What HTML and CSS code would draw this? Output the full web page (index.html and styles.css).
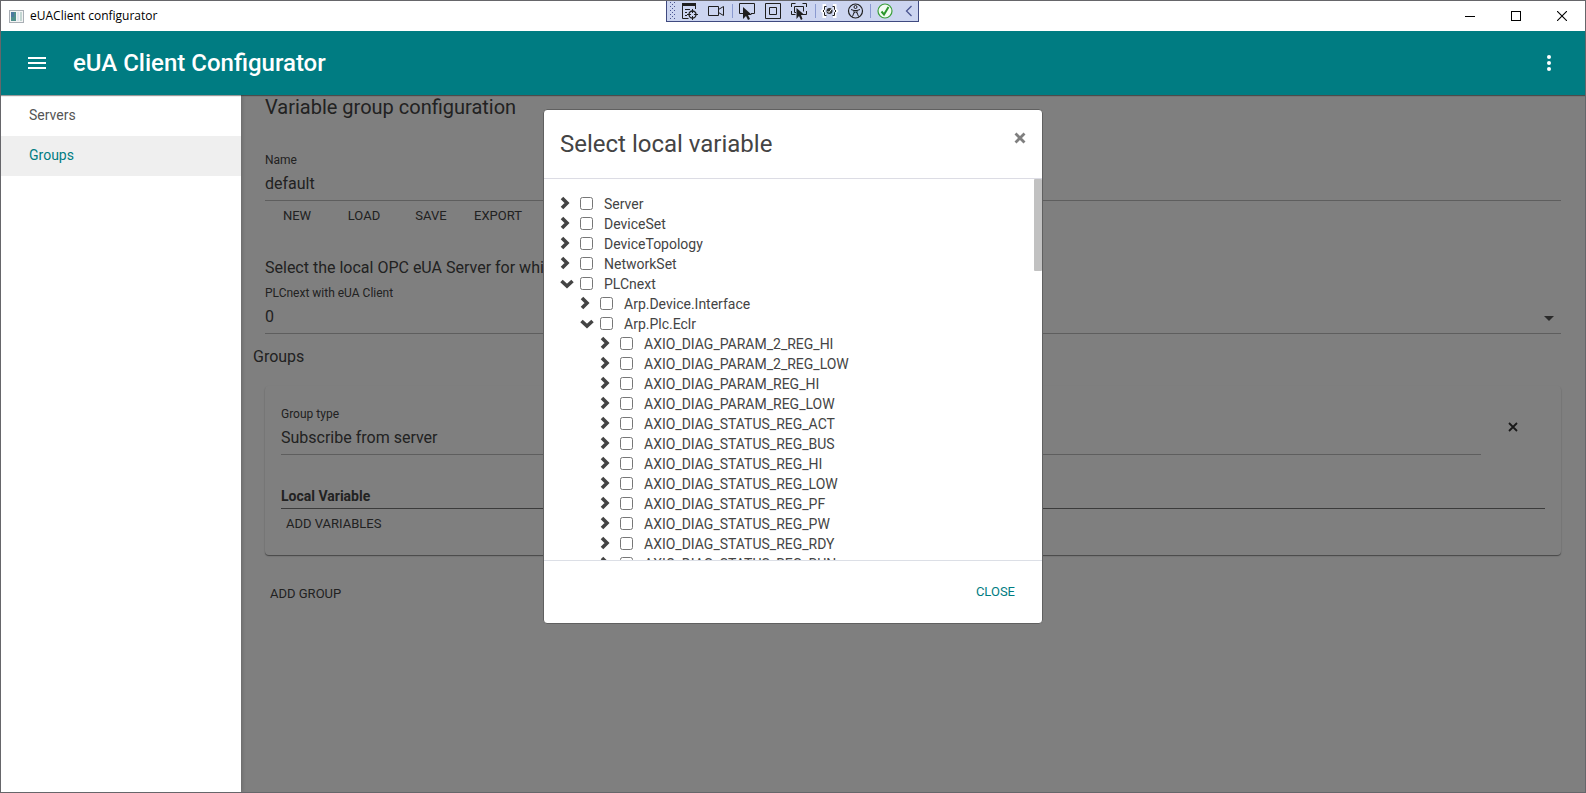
FILE: index.html
```html
<!DOCTYPE html>
<html lang="en">
<head>
<meta charset="utf-8">
<title>eUAClient configurator</title>
<link rel="stylesheet" href="styles.css">
</head>
<body>
<div class="window">
  <header class="titlebar">
    <svg class="titlebar-icon" width="15" height="13" viewBox="0 0 15 13"><rect x=".5" y=".5" width="14" height="12" fill="#f4f4f4" stroke="#a9afb5"/><rect x="2" y="2" width="5" height="9" fill="#4f8f8c"/><rect x="2" y="2" width="3" height="5" fill="#4c78a0"/><rect x="8" y="2" width="2" height="9" fill="#dfe6ee"/><rect x="11" y="2" width="2" height="9" fill="#c3d6d2"/></svg>
    <span class="titlebar-text">eUAClient configurator</span>
    <div class="caption-buttons">
      <button aria-label="Minimize"><svg width="10" height="10"><path d="M0 5.5h10" stroke="#000"/></svg></button>
      <button aria-label="Maximize"><svg width="10" height="10"><rect x=".5" y=".5" width="9" height="9" fill="none" stroke="#000"/></svg></button>
      <button aria-label="Close window"><svg width="10" height="10"><path d="M0 0l10 10M10 0L0 10" stroke="#000" stroke-width="1.1"/></svg></button>
    </div>
  </header>

  <div class="debugbar">
    <svg width="251" height="20" viewBox="0 0 251 20" fill="none" stroke="#1f1f1f">
      <path d="M3.5 1v18M7.5 1v18" stroke="#4a5590" stroke-dasharray="1 3"/><path d="M5.5 3v16" stroke="#4a5590" stroke-dasharray="1 3"/>
      <path d="M15 2h14v3H15z" fill="#1f1f1f" stroke="none"/><path d="M15.5 4v13.500h6M28.500 5v3M18 8.500h5M18 11.500h2M18 14.500h2"/><circle cx="25.500" cy="13.500" r="3.500" stroke-width="1.300"/><path d="M25.500 8v4M25.500 15v4M20 13.500h4M27 13.500h4"/>
      <path d="M41.500 5.500h10v9h-10zM51.500 8.500l5-3v9l-5-3"/>
      <path d="M65.500 3v14M148.500 3v14M203.500 3v14" stroke="#8a9ad0"/>
      <path d="M77 12.500h-4.500v-10h15v10H84"/><path d="M76 6v12l3-3 2 4 2-1-2-4h4z" fill="#1f1f1f" stroke="none"/>
      <path d="M98.500 2.500h15v15h-15zM102.500 6.500h7v7h-7z"/>
      <path d="M124.500 6V2.500h4M135.500 2.500h4V6M124.500 10v3.500h4M136 13.500h3.500V10M129 11.500h-1.500v-6h9v5"/><path d="M129.500 7v11l2.500-3 2 4 1.500-1-1.500-4h3.500z" fill="#1f1f1f" stroke="none"/>
      <path d="M159 4.500h-2v4l-1.500 1.500 1.500 1.500v4h2M166 4.500h2v4l1.500 1.500-1.500 1.500v4h-2" stroke="#fff" stroke-width="3"/><path d="M159.500 5.500h-2v3l-1.500 1.500 1.500 1.500v3h2M165.500 5.500h2v3l1.500 1.500-1.500 1.500v3h-2"/><circle cx="162.500" cy="10" r="3" fill="#333" stroke="none"/><path d="M160.500 10l1.500 1.500 3-4" stroke="#fff"/>
      <circle cx="188.500" cy="10" r="7" stroke-width="1.200"/><circle cx="188.500" cy="6" r="1.500"/><path d="M184 8.500l3 1v2l-1.500 4M193 8.500l-3 1v2l1.500 4M187 9.500h3M187 12l1.500-1 1.500 1"/>
      <circle cx="218" cy="10" r="7" fill="#f1fbf1" stroke="#3a9f3a" stroke-width="1.200"/><path d="M214.500 10.500l2.500 3 4.500-7.500" stroke="#2b982b" stroke-width="2"/>
      <path d="M244.500 5l-5 5 5 5" stroke="#4a5590" stroke-width="1.300"/>
    </svg>
  </div>

  <div class="appbar">
    <button class="icon-button" aria-label="Menu"><svg width="18" height="12"><path d="M0 1h18M0 6h18M0 11h18" stroke="#fff" stroke-width="2"/></svg></button>
    <h1 class="app-title">eUA Client Configurator</h1>
    <button class="icon-button" aria-label="More options"><svg width="4" height="16" fill="#fff"><circle cx="2" cy="2" r="2"/><circle cx="2" cy="8" r="2"/><circle cx="2" cy="14" r="2"/></svg></button>
  </div>

  <div class="workspace">
    <nav class="sidebar">
      <a class="nav-item" href="#servers">Servers</a>
      <a class="nav-item active" href="#groups">Groups</a>
    </nav>
    <main class="content">
      <h2 class="page-title">Variable group configuration</h2>
      <div class="field">
        <label for="name">Name</label>
        <input id="name" type="text" value="default">
      </div>
      <div class="actions">
        <button class="text-button">NEW</button>
        <button class="text-button">LOAD</button>
        <button class="text-button">SAVE</button>
        <button class="text-button">EXPORT</button>
      </div>
      <p class="hint">Select the local OPC eUA Server for which</p>
      <div class="field select-field">
        <label for="plc">PLCnext with eUA Client</label>
        <select id="plc"><option>0</option></select>
        <svg class="arrow" width="10" height="5"><path d="M0 0h10L5 5z" fill="#555"/></svg>
      </div>
      <h3 class="section-title">Groups</h3>
      <section class="card">
        <div class="card-row">
          <div class="field">
            <label for="type">Group type</label>
            <select id="type"><option>Subscribe from server</option></select>
          </div>
          <button class="remove" aria-label="Remove group"><svg width="10" height="10"><path d="M1 1l8 8M9 1L1 9" stroke="#333" stroke-width="1.800"/></svg></button>
        </div>
        <table class="variables"><thead><tr><th>Local Variable</th></tr></thead></table>
        <button class="text-button">ADD VARIABLES</button>
      </section>
      <button class="text-button add-group">ADD GROUP</button>
    </main>
  </div>

  <div class="modal" role="dialog" aria-labelledby="dialog-title">
    <div class="modal-header">
      <h2 id="dialog-title">Select local variable</h2>
      <button class="modal-x" aria-label="Close dialog"><svg width="12" height="12"><path d="M1.500 1.500l9 9M10.500 1.500l-9 9" stroke="#7f7f7f" stroke-width="2.800"/></svg></button>
    </div>
    <div class="modal-body">
      <ul class="tree" id="tree"></ul>
      <div class="thumb"></div>
    </div>
    <div class="modal-footer"><button class="close-button">CLOSE</button></div>
  </div>
</div>
<script src="tree.js"></script>
</body>
</html>
```
FILE: tree.js
```js
const leaves = ['PARAM_2_REG_HI', 'PARAM_2_REG_LOW', 'PARAM_REG_HI', 'PARAM_REG_LOW',
  'STATUS_REG_ACT', 'STATUS_REG_BUS', 'STATUS_REG_HI', 'STATUS_REG_LOW',
  'STATUS_REG_PF', 'STATUS_REG_PW', 'STATUS_REG_RDY', 'STATUS_REG_RUN']
  .map(name => ({ name: 'AXIO_DIAG_' + name }));
const nodes = [
  { name: 'Server' }, { name: 'DeviceSet' }, { name: 'DeviceTopology' }, { name: 'NetworkSet' },
  { name: 'PLCnext', children: [
    { name: 'Arp.Device.Interface' },
    { name: 'Arp.Plc.Eclr', children: leaves }
  ] }
];
const right = '<svg width="14" height="14"><path d="M2 2l5 5-5 5" fill="none" stroke="#444" stroke-width="3.600"/></svg>';
const down = '<svg width="14" height="14"><path d="M1.500 5l5.500 5 5.500-5" fill="none" stroke="#444" stroke-width="3.600"/></svg>';

function render(list, parent) {
  for (const node of list) {
    const item = document.createElement('li');
    item.innerHTML = '<div class="node"><button class="toggle" aria-label="Toggle ' + node.name + '">' +
      (node.children ? down : right) + '</button><label><input type="checkbox"><span>' +
      node.name + '</span></label></div>';
    if (node.children) {
      const sub = document.createElement('ul');
      sub.className = 'subtree';
      render(node.children, sub);
      item.append(sub);
    }
    parent.append(item);
  }
}
render(nodes, document.getElementById('tree'));
```
FILE: styles.css
```css
* { box-sizing: border-box; }
body { margin: 0; font-family: Roboto, "Liberation Sans", sans-serif; color: #444; }
h1, h2, h3, p, ul { margin: 0; padding: 0; font-weight: 400; }
ul { list-style: none; }
button { border: 0; padding: 0; background: none; font: inherit; color: inherit; }
svg { display: block; }

.window { position: relative; display: flex; flex-direction: column; height: 100vh; border: 1px solid #66666a; overflow: hidden; background: #fff; }
.titlebar { display: flex; align-items: center; height: 30px; padding-left: 8px; gap: 6px; background: #fff; color: #000; flex: none; }
.titlebar-text { font: 12px/16px "Open Sans", "Noto Sans", sans-serif; }
.caption-buttons { display: flex; margin-left: auto; }
.caption-buttons button { width: 46px; height: 28px; display: grid; place-items: center; }

.debugbar { position: absolute; top: -1px; left: 665px; height: 22px; border: 1px solid #3f4a80; background: #ccd5f0; }

.appbar { position: relative; z-index: 2; display: flex; align-items: center; flex: none; height: 64px; padding: 0 12px; background: #007c82; color: #fff; box-shadow: 0 1px 1px rgba(0, 0, 0, .4); }
.icon-button { width: 48px; height: 48px; display: grid; place-items: center; }
.app-title { flex: 1; margin-left: 12px; font-size: 24px; line-height: 32px; font-weight: 500; }

.workspace { display: flex; flex: 1; min-height: 0; }
.sidebar { position: relative; z-index: 1; flex: none; width: 240px; padding-top: 1px; background: #fff; box-shadow: 1px 0 4px rgba(0, 0, 0, .2); }
.nav-item { display: block; height: 40px; padding-left: 28px; font-size: 14px; line-height: 38px; color: #555; text-decoration: none; }
.nav-item.active { background: #efefef; color: #007c82; }

.content { position: relative; flex: 1; padding: 0 24px; }
.content::after { content: ""; position: absolute; inset: 0; background: rgba(0, 0, 0, .5); }
.page-title { font-size: 20px; line-height: 24px; }
.field { position: relative; display: flex; flex-direction: column; border-bottom: 1px solid #bdbdbd; }
.field label { font-size: 12px; line-height: 16px; }
.field input, .field select { width: 100%; height: 32px; border: 0; padding: 0; background: none; appearance: none; font: 16px/32px Roboto, sans-serif; color: #444; }
.page-title + .field { margin-top: 33px; }
.actions { display: flex; gap: 3px; }
.text-button { min-width: 64px; height: 30px; font-size: 13px; line-height: 30px; }
.hint { margin-top: 26px; font-size: 16px; line-height: 22px; }
.select-field { margin-top: 6px; }
.arrow { position: absolute; right: 7px; bottom: 12px; }
.section-title { margin: 12px 0 18px -12px; font-size: 16px; line-height: 22px; }
.card { padding: 20px 16px 16px; border-radius: 4px; box-shadow: 0 1px 3px rgba(0, 0, 0, .1), 0 1px 1px rgba(0, 0, 0, .4); }
.card-row { display: flex; }
.card-row .field { flex: 1; }
.remove { width: 64px; height: 42px; display: grid; place-items: center; }
.variables { width: 100%; margin-top: 31px; border-collapse: collapse; }
.variables th { padding: 0; height: 22px; border-bottom: 1px solid #777; font-size: 14px; line-height: 21px; text-align: left; }
.card .text-button { padding: 0 5px; }
.add-group { display: block; margin-top: 24px; padding: 0 5px; }

.modal { position: absolute; z-index: 3; top: 108px; left: 50%; width: 500px; margin-left: -250px; border: 1px solid #606060; border-radius: 4px; background: #fff; overflow: hidden; }
.modal-header { display: flex; justify-content: space-between; align-items: flex-start; height: 69px; padding: 16px; border-bottom: 1px solid #dcdce4; }
.modal-header h2 { font-size: 24px; line-height: 36px; }
.modal-x { width: 12px; height: 24px; display: grid; place-items: center; }
.modal-body { position: relative; height: calc(100vh - 412px); padding: 14px 16px 0; overflow: hidden; }
.thumb { position: absolute; top: 0; right: 0; width: 8px; height: 92px; border-radius: 1px; background: #c1c1c1; }
.node { display: flex; align-items: center; height: 20px; }
.toggle { flex: none; width: 20px; }
.node label { display: flex; align-items: center; font-size: 14px; line-height: 20px; }
.node input { width: 13px; height: 13px; margin: 0 11px 0 0; }
.node span { padding-top: 2px; }
.subtree { padding-left: 20px; }
.modal-footer { display: flex; justify-content: flex-end; align-items: center; height: 63px; padding: 0 27px 2px 0; border-top: 1px solid #dcdfe6; }
.close-button { height: 32px; font-size: 13px; color: #007c82; }
```
